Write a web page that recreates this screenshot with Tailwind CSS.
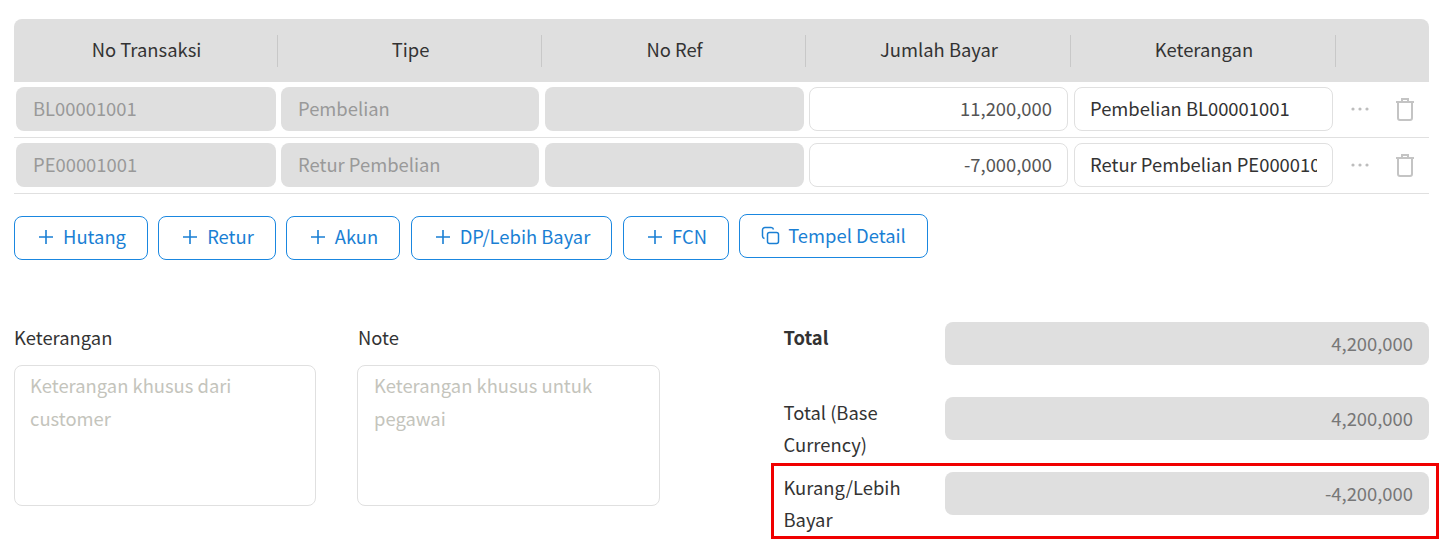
<!DOCTYPE html>
<html lang="en">
<head>
  <meta charset="UTF-8" />
  <title>Pembayaran</title>
  <script src="https://cdn.jsdelivr.net/npm/@tailwindcss/browser@4"></script>
</head>
<body class="bg-white text-[#333] font-['Noto_Sans_CJK_SC','Noto_Sans',sans-serif] text-[18.4px] leading-[32px] overflow-hidden">
  <div class="w-[1442px] h-[549px] pl-[14px] pr-[13px] pt-[19px]">

    <!-- Table header -->
    <div class="flex items-center h-[63px] bg-[#dfdfdf] rounded-t-[8px] text-center leading-[29px]">
      <div class="w-[264px] h-[32px] pl-[2px] border-r border-[#c8c8c8]">No Transaksi</div>
      <div class="w-[264px] h-[32px] pl-[2px] border-r border-[#c8c8c8]">Tipe</div>
      <div class="w-[264px] h-[32px] pl-[2px] border-r border-[#c8c8c8]">No Ref</div>
      <div class="w-[265px] h-[32px] pl-[2px] border-r border-[#c8c8c8]">Jumlah Bayar</div>
      <div class="w-[265px] h-[32px] pl-[2px] border-r border-[#c8c8c8]">Keterangan</div>
    </div>

    <!-- Rows -->
    <div class="flex items-start h-[56px] pt-[5px] border-b border-[#e0e0e0]">
      <div class="ml-[2px] w-[260px] h-[44px] leading-[43px] rounded-[8px] bg-[#dfdfdf] text-[#999] pl-[17px]">BL00001001</div>
      <div class="ml-[5px] w-[258px] h-[44px] leading-[43px] rounded-[8px] bg-[#dfdfdf] text-[#999] pl-[17px]">Pembelian</div>
      <div class="ml-[6px] w-[259px] h-[44px] rounded-[8px] bg-[#dfdfdf]"></div>
      <div class="ml-[5px] w-[259px] h-[44px] leading-[41px] rounded-[8px] border border-[#e0e0e0] text-right pr-[15px] text-[#555]">11,200,000</div>
      <div class="ml-[6px] w-[259px] h-[44px] leading-[41px] rounded-[8px] border border-[#e0e0e0] pl-[15px] pr-[15px] overflow-hidden whitespace-nowrap">Pembelian BL00001001</div>
      <div class="ml-[18px] w-[18px] h-[44px] flex items-center">
        <svg width="18" height="4" viewBox="0 0 18 4" fill="#bdbdbd"><circle cx="2" cy="2" r="1.6"/><circle cx="9" cy="2" r="1.6"/><circle cx="16" cy="2" r="1.6"/></svg>
      </div>
      <div class="ml-[26px] h-[44px] flex items-center">
        <svg width="20" height="24" viewBox="0 0 20 24" fill="none" stroke="#c4c4c4" stroke-width="2"><path d="M1 5h18M7 5V2h6v3M3 5v16a2 2 0 0 0 2 2h10a2 2 0 0 0 2-2V5"/></svg>
      </div>
    </div>
    <div class="flex items-start h-[56px] pt-[5px] border-b border-[#e0e0e0]">
      <div class="ml-[2px] w-[260px] h-[44px] leading-[43px] rounded-[8px] bg-[#dfdfdf] text-[#999] pl-[17px]">PE00001001</div>
      <div class="ml-[5px] w-[258px] h-[44px] leading-[43px] rounded-[8px] bg-[#dfdfdf] text-[#999] pl-[17px]">Retur Pembelian</div>
      <div class="ml-[6px] w-[259px] h-[44px] rounded-[8px] bg-[#dfdfdf]"></div>
      <div class="ml-[5px] w-[259px] h-[44px] leading-[41px] rounded-[8px] border border-[#e0e0e0] text-right pr-[15px] text-[#555]">-7,000,000</div>
      <div class="ml-[6px] w-[259px] h-[44px] leading-[41px] rounded-[8px] border border-[#e0e0e0] pl-[15px] pr-[15px]"><div class="overflow-hidden whitespace-nowrap">Retur Pembelian PE00001001</div></div>
      <div class="ml-[18px] w-[18px] h-[44px] flex items-center">
        <svg width="18" height="4" viewBox="0 0 18 4" fill="#bdbdbd"><circle cx="2" cy="2" r="1.6"/><circle cx="9" cy="2" r="1.6"/><circle cx="16" cy="2" r="1.6"/></svg>
      </div>
      <div class="ml-[26px] h-[44px] flex items-center">
        <svg width="20" height="24" viewBox="0 0 20 24" fill="none" stroke="#c4c4c4" stroke-width="2"><path d="M1 5h18M7 5V2h6v3M3 5v16a2 2 0 0 0 2 2h10a2 2 0 0 0 2-2V5"/></svg>
      </div>
    </div>

    <!-- Buttons -->
    <div class="flex items-start mt-[21px] text-[#1a7fd4] leading-[29px]">
      <button class="w-[134px] h-[44px] mt-[1px] pl-[2px] pb-[2px] flex items-center justify-center gap-[9px] rounded-[8px] border border-[#1a87e0]">
        <svg width="16" height="16" viewBox="0 0 16 16" stroke="currentColor" stroke-width="1.6"><path d="M8 1v14M1 8h14"/></svg><span class="-mt-[2px]">Hutang</span>
      </button>
      <button class="ml-[10px] w-[118px] h-[44px] mt-[1px] pl-[2px] pb-[2px] flex items-center justify-center gap-[9px] rounded-[8px] border border-[#1a87e0]">
        <svg width="16" height="16" viewBox="0 0 16 16" stroke="currentColor" stroke-width="1.6"><path d="M8 1v14M1 8h14"/></svg><span class="-mt-[2px]">Retur</span>
      </button>
      <button class="ml-[10px] w-[114px] h-[44px] mt-[1px] pl-[2px] pb-[2px] flex items-center justify-center gap-[9px] rounded-[8px] border border-[#1a87e0]">
        <svg width="16" height="16" viewBox="0 0 16 16" stroke="currentColor" stroke-width="1.6"><path d="M8 1v14M1 8h14"/></svg><span class="-mt-[2px]">Akun</span>
      </button>
      <button class="ml-[11px] w-[201px] h-[44px] mt-[1px] pl-[2px] pb-[2px] flex items-center justify-center gap-[9px] rounded-[8px] border border-[#1a87e0]">
        <svg width="16" height="16" viewBox="0 0 16 16" stroke="currentColor" stroke-width="1.6"><path d="M8 1v14M1 8h14"/></svg><span class="-mt-[2px]">DP/Lebih Bayar</span>
      </button>
      <button class="ml-[11px] w-[106px] h-[44px] mt-[1px] pl-[2px] pb-[2px] flex items-center justify-center gap-[9px] rounded-[8px] border border-[#1a87e0]">
        <svg width="16" height="16" viewBox="0 0 16 16" stroke="currentColor" stroke-width="1.6"><path d="M8 1v14M1 8h14"/></svg><span class="-mt-[2px]">FCN</span>
      </button>
      <button class="ml-[10px] w-[189px] h-[44px] -mt-[1px] pb-[2px] flex items-center justify-center gap-[8px] rounded-[8px] border border-[#1a87e0]">
        <svg width="19" height="19" viewBox="0 0 19 19" fill="none" stroke="currentColor" stroke-width="1.5"><rect x="6.5" y="6.5" width="11" height="11" rx="2"/><path d="M3.5 12.5A2.5 2.5 0 0 1 1.5 10V4A2.5 2.5 0 0 1 4 1.5h6a2.5 2.5 0 0 1 2.5 2"/></svg>Tempel Detail
      </button>
    </div>

    <!-- Bottom form -->
    <div class="flex items-start mt-[61px]">
      <div class="w-[302px] mt-[1px]">
        <div class="h-[32px] leading-[30px]">Keterangan</div>
        <div class="mt-[11px] h-[141px] rounded-[8px] border border-[#e0e0e0] px-[15px] py-[3px] leading-[33px] text-[#c4c4bc]">Keterangan khusus dari customer</div>
      </div>
      <div class="ml-[41px] w-[303px] mt-[1px]">
        <div class="h-[32px] ml-[1px] leading-[30px]">Note</div>
        <div class="mt-[11px] h-[141px] rounded-[8px] border border-[#e0e0e0] px-[16px] py-[3px] leading-[33px] text-[#c4c4bc]">Keterangan khusus untuk pegawai</div>
      </div>
      <div class="ml-[124px] w-[645px]">
        <div class="flex items-start h-[75px]">
          <div class="w-[161px] -ml-[0.5px] mr-[0.5px] font-bold">Total</div>
          <div class="w-[484px] h-[43px] mt-[1px] leading-[43px] rounded-[8px] bg-[#dfdfdf] text-right pr-[16px] text-[#777]">4,200,000</div>
        </div>
        <div class="flex items-start h-[75px]">
          <div class="w-[161px] -ml-[0.5px] mr-[0.5px] pr-[40px]">Total (Base Currency)</div>
          <div class="w-[484px] h-[43px] mt-[1px] leading-[43px] rounded-[8px] bg-[#dfdfdf] text-right pr-[16px] text-[#777]">4,200,000</div>
        </div>
        <div class="relative flex items-start">
          <div class="w-[161px] -ml-[0.5px] mr-[0.5px] pr-[40px]">Kurang/Lebih Bayar</div>
          <div class="w-[484px] h-[43px] mt-[1px] leading-[43px] rounded-[8px] bg-[#dfdfdf] text-right pr-[16px] text-[#777]">-4,200,000</div>
          <div class="absolute left-[-13px] top-[-8px] w-[668px] h-[76px] border-[3px] border-[#f00000]"></div>
        </div>
      </div>
    </div>
  </div>
</body>
</html>
